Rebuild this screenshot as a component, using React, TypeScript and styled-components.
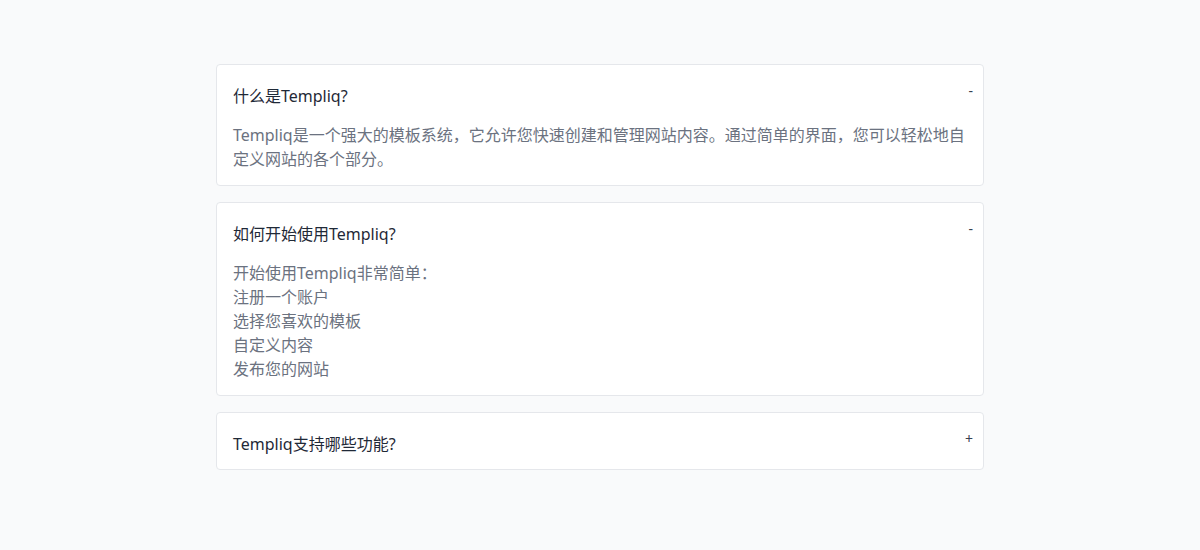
import { useState } from "react";
import styled, { createGlobalStyle } from "styled-components";

type FaqItem = {
  question: string;
  answer: string[];
  open: boolean;
};

const faqs: FaqItem[] = [
  {
    question: "什么是Templiq?",
    answer: [
      "Templiq是一个强大的模板系统，它允许您快速创建和管理网站内容。通过简单的界面，您可以轻松地自定义网站的各个部分。",
    ],
    open: true,
  },
  {
    question: "如何开始使用Templiq?",
    answer: [
      "开始使用Templiq非常简单：",
      "注册一个账户",
      "选择您喜欢的模板",
      "自定义内容",
      "发布您的网站",
    ],
    open: true,
  },
  {
    question: "Templiq支持哪些功能?",
    answer: ["Templiq支持模板管理、内容编辑、多语言和响应式设计等功能。"],
    open: false,
  },
];

const GlobalStyle = createGlobalStyle`
  html, body {
    margin: 0;
    padding: 0;
    background-color: #f9fafb;
  }
  body {
    font-family: "Noto Sans", "Noto Sans CJK SC", sans-serif;
  }
`;

const Page = styled.main`
  min-height: 550px;
  padding: 64px 16px;
  box-sizing: border-box;
`;

const List = styled.div`
  max-width: 768px;
  margin: 0 auto;
  display: flex;
  flex-direction: column;
  gap: 16px;
`;

const Card = styled.div`
  background-color: #ffffff;
  border: 1px solid #e5e7eb;
  border-radius: 4px;
`;

const Header = styled.button`
  width: 100%;
  display: flex;
  justify-content: space-between;
  align-items: flex-start;
  padding: 19px 10px 13px 16px;
  border: none;
  background: transparent;
  cursor: pointer;
  text-align: left;
  font-family: inherit;
`;

const Question = styled.span`
  font-size: 16px;
  line-height: 24px;
  color: #1f2937;
`;

const Sign = styled.span`
  font-size: 14px;
  line-height: 14px;
  color: #374151;
`;

const Answer = styled.div`
  padding: 2px 16px 14px;
  font-size: 16px;
  line-height: 24px;
  color: #6b7280;
`;

const Line = styled.div``;

const Faq = ({ question, answer, open }: FaqItem) => {
  const [isOpen, setIsOpen] = useState<boolean>(open);
  return (
    <Card>
      <Header onClick={() => setIsOpen(!isOpen)}>
        <Question>{question}</Question>
        <Sign>{isOpen ? "-" : "+"}</Sign>
      </Header>
      {isOpen && (
        <Answer>
          {answer.map((line) => (
            <Line key={line}>{line}</Line>
          ))}
        </Answer>
      )}
    </Card>
  );
};

export default function App() {
  return (
    <>
      <GlobalStyle />
      <Page>
        <List>
          {faqs.map((item) => (
            <Faq key={item.question} {...item} />
          ))}
        </List>
      </Page>
    </>
  );
}
